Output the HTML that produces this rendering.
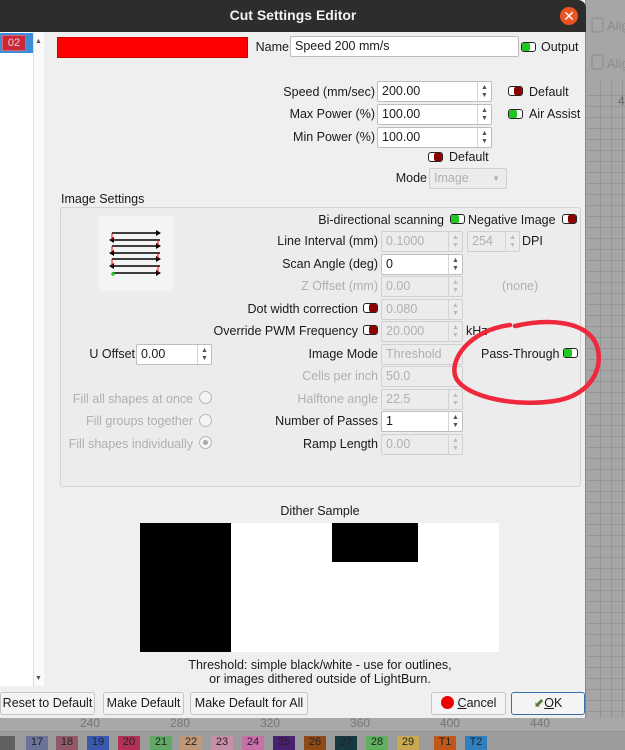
<!DOCTYPE html>
<html><head><meta charset="utf-8">
<style>
*{box-sizing:border-box;margin:0;padding:0}
body{width:625px;height:750px;overflow:hidden;position:relative;background:#a4a4a4;font-family:"Liberation Sans","DejaVu Sans",sans-serif;font-size:12px;color:#1a1a1a}
.a{position:absolute}
.t{position:absolute;white-space:nowrap;line-height:14px}
.r{text-align:right}
.dis{color:#b0b0b0}
.inp{position:absolute;background:#fff;border:1px solid #bdbdbd;border-radius:2px;height:21px;padding:2px 4px;line-height:15px;white-space:nowrap}
.inp.d{background:#ececec;color:#b0b0b0;border-color:#d0d0d0}
.sp{position:absolute;right:0;top:0;width:14px;height:100%;border-left:1px solid #d4d4d4;font-size:7px;line-height:8px;color:#555;text-align:center;padding-top:2px}
.inp.d .sp{color:#bbb}
.tg{position:absolute;width:15px;height:10px;border:1px solid #222;border-radius:3px;background:#fff}
.tg i{position:absolute;top:0;width:8px;height:8px;border-radius:2px}
.on i{left:0;background:#1ec81e}
.off i{right:0;background:#8b0000}
.btn{position:absolute;top:692px;height:23px;background:#f4f4f4;border:1px solid #c4c4c4;border-radius:3px;line-height:21px;text-align:center;font-size:12.5px}
.rad{position:absolute;width:13px;height:13px;border:1px solid #b8b8b8;border-radius:50%;background:#f4f4f4}
</style></head><body>
<svg class="a" style="left:585px;top:0" width="40" height="750">
<rect width="40" height="750" fill="#a6a6a6"/>
<g stroke="#959595" stroke-width="1">
<line x1="15.5" y1="80" x2="15.5" y2="720"/><line x1="26.5" y1="80" x2="26.5" y2="720"/><line x1="37.5" y1="80" x2="37.5" y2="720"/>
</g>
<g stroke="#959595"><path d="M0 95.5H40M0 106.5H40M0 117.5H40M0 128.5H40M0 139.5H40M0 150.5H40M0 161.5H40M0 172.5H40M0 183.5H40M0 194.5H40M0 205.5H40M0 216.5H40M0 227.5H40M0 238.5H40M0 249.5H40M0 260.5H40M0 271.5H40M0 282.5H40M0 293.5H40M0 304.5H40M0 315.5H40M0 326.5H40M0 337.5H40M0 348.5H40M0 359.5H40M0 370.5H40M0 381.5H40M0 392.5H40M0 403.5H40M0 414.5H40M0 425.5H40M0 436.5H40M0 447.5H40M0 458.5H40M0 469.5H40M0 480.5H40M0 491.5H40M0 502.5H40M0 513.5H40M0 524.5H40M0 535.5H40M0 546.5H40M0 557.5H40M0 568.5H40M0 579.5H40M0 590.5H40M0 601.5H40M0 612.5H40M0 623.5H40M0 634.5H40M0 645.5H40M0 656.5H40M0 667.5H40M0 678.5H40M0 689.5H40M0 700.5H40M0 711.5H40"/></g>
<rect x="7" y="18" width="11" height="14" rx="2" fill="none" stroke="#8c8c8c"/><text x="22" y="30" font-size="13" fill="#8c8c8c">Alig</text>
<rect x="7" y="55" width="11" height="14" rx="2" fill="none" stroke="#8c8c8c"/><text x="22" y="68" font-size="13" fill="#8c8c8c">Alig</text>
<text x="33" y="105" font-size="12" fill="#666">4</text>
</svg>
<div class="a" style="left:0;top:718px;width:625px;height:14px;background:#a8a8a8;border-bottom:1px solid #909090"></div>
<div class="t" style="left:80px;top:716px;color:#777">240</div>
<div class="t" style="left:170px;top:716px;color:#777">280</div>
<div class="t" style="left:260px;top:716px;color:#777">320</div>
<div class="t" style="left:350px;top:716px;color:#777">360</div>
<div class="t" style="left:440px;top:716px;color:#777">400</div>
<div class="t" style="left:530px;top:716px;color:#777">440</div>
<div class="a" style="left:0;top:732px;width:625px;height:18px;background:#9c9c9c"></div>
<div class="a" style="top:736px;left:0;font-size:11px;color:#222">
<span class="a" style="left:0;width:15px;height:14px;background:#606060"></span>
<span class="a" style="left:26px;width:22px;height:14px;background:#6a7398;text-align:center">17</span>
<span class="a" style="left:56px;width:22px;height:14px;background:#935868;text-align:center">18</span>
<span class="a" style="left:87px;width:22px;height:14px;background:#3a58b0;text-align:center">19</span>
<span class="a" style="left:118px;width:22px;height:14px;background:#b23058;text-align:center">20</span>
<span class="a" style="left:150px;width:22px;height:14px;background:#5fa865;text-align:center">21</span>
<span class="a" style="left:180px;width:22px;height:14px;background:#c09878;text-align:center">22</span>
<span class="a" style="left:211px;width:22px;height:14px;background:#c890a8;text-align:center">23</span>
<span class="a" style="left:242px;width:22px;height:14px;background:#c870a8;text-align:center">24</span>
<span class="a" style="left:273px;width:22px;height:14px;background:#4a2070;text-align:center">25</span>
<span class="a" style="left:304px;width:22px;height:14px;background:#904a18;text-align:center">26</span>
<span class="a" style="left:335px;width:22px;height:14px;background:#183840;text-align:center">27</span>
<span class="a" style="left:366px;width:22px;height:14px;background:#60b060;text-align:center">28</span>
<span class="a" style="left:397px;width:22px;height:14px;background:#c8a850;text-align:center">29</span>
<span class="a" style="left:434px;width:22px;height:14px;background:#c05818;text-align:center">T1</span>
<span class="a" style="left:465px;width:22px;height:14px;background:#3080c0;text-align:center">T2</span>
</div>
<div class="a" style="left:0;top:0;width:586px;height:718px;background:#efefef;border-right:1px solid #888"></div>
<div class="a" style="left:0;top:0;width:586px;height:32px;background:#2f2c2c;border-radius:0 8px 0 0"></div>
<div class="t" style="left:0;width:586px;top:8px;text-align:center;color:#f2f2f2;font-weight:bold;font-size:14px">Cut Settings Editor</div>
<div class="a" style="left:560px;top:7px;width:18px;height:18px;border-radius:50%;background:#e95420;color:#fff;text-align:center;line-height:18px;font-size:14px">✕</div>
<div class="a" style="left:0;top:32px;width:44px;height:654px;background:#fff;border-right:1px solid #c8c8c8"></div>
<div class="a" style="left:0;top:33px;width:33px;height:20px;background:#3a8fd8"></div>
<div class="a" style="left:2px;top:35px;width:24px;height:16px;background:#c8283a;border:1px solid #e06070;color:#f4d0d0;text-align:center;line-height:14px;font-size:11px">02</div>
<div class="a" style="left:33px;top:32px;width:11px;height:654px;border-left:1px solid #ddd;background:#fafafa"></div>
<div class="t" style="left:35px;top:35px;font-size:7px;color:#555">▲</div>
<div class="t" style="left:35px;top:672px;font-size:7px;color:#555">▼</div>
<div class="a" style="left:57px;top:37px;width:191px;height:21px;background:#f00;border:1px solid #c00"></div>
<div class="t r" style="right:336px;top:40px;font-size:12.5px">Name</div>
<div class="inp" style="left:290px;top:36px;width:229px;font-size:12.5px">Speed 200 mm/s</div>
<div class="tg on" style="left:521px;top:42px"><i></i></div>
<div class="t" style="left:541px;top:40px;font-size:12.5px">Output</div>
<div class="t r" style="right:250px;top:85px;font-size:12.5px">Speed (mm/sec)</div>
<div class="inp" style="left:377px;top:81px;width:115px;font-size:12.5px">200.00<div class="sp">▲<br>▼</div></div>
<div class="tg off" style="left:508px;top:86px"><i></i></div>
<div class="t" style="left:529px;top:85px;font-size:12.5px">Default</div>
<div class="t r" style="right:250px;top:107px;font-size:12.5px">Max Power (%)</div>
<div class="inp" style="left:377px;top:104px;width:115px;font-size:12.5px">100.00<div class="sp">▲<br>▼</div></div>
<div class="tg on" style="left:508px;top:109px"><i></i></div>
<div class="t" style="left:529px;top:107px;font-size:12.5px">Air Assist</div>
<div class="t r" style="right:250px;top:130px;font-size:12.5px">Min Power (%)</div>
<div class="inp" style="left:377px;top:127px;width:115px;font-size:12.5px">100.00<div class="sp">▲<br>▼</div></div>
<div class="tg off" style="left:428px;top:152px"><i></i></div>
<div class="t" style="left:449px;top:150px;font-size:12.5px">Default</div>
<div class="t r" style="right:198px;top:171px;font-size:12.5px">Mode</div>
<div class="inp d" style="left:429px;top:168px;width:78px;font-size:12.5px">Image<span style="position:absolute;right:6px;top:2px;font-size:8px">▼</span></div>
<div class="t" style="left:61px;top:192px;font-size:12.5px">Image Settings</div>
<div class="a" style="left:60px;top:207px;width:521px;height:280px;border:1px solid #d4d4d4;border-radius:3px;background:#ececec"></div>
<svg class="a" style="left:99px;top:216px" width="74" height="75">
<rect width="74" height="75" fill="#f4f4f4"/>
<g stroke="#000" stroke-width="1.5">
<line x1="13" y1="17" x2="60" y2="17"/><line x1="12" y1="24" x2="61" y2="24"/><line x1="13" y1="30" x2="60" y2="30"/><line x1="12" y1="37" x2="61" y2="37"/><line x1="13" y1="43" x2="60" y2="43"/><line x1="12" y1="50" x2="61" y2="50"/><line x1="13" y1="57" x2="60" y2="57"/>
</g>
<g fill="#000"><path d="M62 17l-5-3v6zM10 24l5-3v6zM62 30l-5-3v6zM10 37l5-3v6zM62 43l-5-3v6zM10 50l5-3v6zM62 57l-5-3v6z"/></g>
<g stroke="#e00" stroke-width="1"><line x1="13" y1="17" x2="13" y2="24"/><line x1="59" y1="24" x2="59" y2="30"/><line x1="13" y1="30" x2="13" y2="37"/><line x1="59" y1="37" x2="59" y2="43"/><line x1="13" y1="43" x2="13" y2="50"/><line x1="59" y1="50" x2="59" y2="57"/></g>
<circle cx="14" cy="58" r="1.8" fill="#2c2"/>
</svg>
<div class="t r" style="right:181px;top:213px;font-size:12.5px">Bi-directional scanning</div>
<div class="tg on" style="left:450px;top:214px"><i></i></div>
<div class="t" style="left:468px;top:213px;font-size:12.5px">Negative Image</div>
<div class="tg off" style="left:562px;top:214px"><i></i></div>
<div class="t r" style="right:247px;top:234px;font-size:12.5px">Line Interval (mm)</div>
<div class="inp d" style="left:381px;top:231px;width:82px;font-size:12.5px">0.1000<div class="sp">▲<br>▼</div></div>
<div class="inp d" style="left:467px;top:231px;width:53px;font-size:12.5px">254<div class="sp">▲<br>▼</div></div>
<div class="t" style="left:522px;top:234px;font-size:12.5px">DPI</div>
<div class="t r" style="right:247px;top:257px;font-size:12.5px">Scan Angle (deg)</div>
<div class="inp" style="left:381px;top:254px;width:82px;font-size:12.5px">0<div class="sp">▲<br>▼</div></div>
<div class="t r dis" style="right:247px;top:279px;font-size:12.5px">Z Offset (mm)</div>
<div class="inp d" style="left:381px;top:276px;width:82px;font-size:12.5px">0.00<div class="sp">▲<br>▼</div></div>
<div class="t dis" style="left:502px;top:279px;font-size:12.5px">(none)</div>
<div class="t r" style="right:267px;top:302px;font-size:12.5px">Dot width correction</div>
<div class="tg off" style="left:363px;top:303px"><i></i></div>
<div class="inp d" style="left:381px;top:299px;width:82px;font-size:12.5px">0.080<div class="sp">▲<br>▼</div></div>
<div class="t r" style="right:267px;top:324px;font-size:12.5px">Override PWM Frequency</div>
<div class="tg off" style="left:363px;top:325px"><i></i></div>
<div class="inp d" style="left:381px;top:321px;width:82px;font-size:12.5px">20.000<div class="sp">▲<br>▼</div></div>
<div class="t" style="left:466px;top:324px;font-size:12.5px">kHz</div>
<div class="t r" style="right:490px;top:347px;font-size:12.5px">U Offset</div>
<div class="inp" style="left:136px;top:344px;width:76px;font-size:12.5px">0.00<div class="sp">▲<br>▼</div></div>
<div class="t r" style="right:247px;top:347px;font-size:12.5px">Image Mode</div>
<div class="inp d" style="left:381px;top:344px;width:82px;font-size:12.5px">Threshold</div>
<div class="t" style="left:481px;top:347px;font-size:12.5px">Pass-Through</div>
<div class="tg on" style="left:563px;top:348px"><i></i></div>
<div class="t r dis" style="right:247px;top:369px;font-size:12.5px">Cells per inch</div>
<div class="inp d" style="left:381px;top:366px;width:82px;font-size:12.5px">50.0</div>
<div class="t r dis" style="right:432px;top:392px;font-size:12.5px">Fill all shapes at once</div>
<div class="rad" style="left:199px;top:391px"></div>
<div class="t r dis" style="right:247px;top:392px;font-size:12.5px">Halftone angle</div>
<div class="inp d" style="left:381px;top:389px;width:82px;font-size:12.5px">22.5<div class="sp">▲<br>▼</div></div>
<div class="t r dis" style="right:432px;top:414px;font-size:12.5px">Fill groups together</div>
<div class="rad" style="left:199px;top:414px"></div>
<div class="t r" style="right:247px;top:414px;font-size:12.5px">Number of Passes</div>
<div class="inp" style="left:381px;top:411px;width:82px;font-size:12.5px">1<div class="sp">▲<br>▼</div></div>
<div class="t r dis" style="right:432px;top:437px;font-size:12.5px">Fill shapes individually</div>
<div class="rad" style="left:199px;top:436px"><div class="a" style="left:3px;top:3px;width:5px;height:5px;border-radius:50%;background:#aaa"></div></div>
<div class="t r" style="right:247px;top:437px;font-size:12.5px">Ramp Length</div>
<div class="inp d" style="left:381px;top:434px;width:82px;font-size:12.5px">0.00<div class="sp">▲<br>▼</div></div>
<div class="t" style="left:0;width:640px;top:504px;text-align:center;font-size:12.5px">Dither Sample</div>
<div class="a" style="left:140px;top:523px;width:359px;height:129px;background:#fff"></div>
<div class="a" style="left:140px;top:523px;width:91px;height:129px;background:#000"></div>
<div class="a" style="left:332px;top:523px;width:86px;height:39px;background:#000"></div>
<div class="t" style="left:0;width:640px;top:658px;text-align:center;font-size:12.5px">Threshold: simple black/white - use for outlines,</div>
<div class="t" style="left:0;width:640px;top:672px;text-align:center;font-size:12.5px">or images dithered outside of LightBurn.</div>
<div class="btn" style="left:0;width:95px">Reset to Default</div>
<div class="btn" style="left:103px;width:81px">Make Default</div>
<div class="btn" style="left:190px;width:118px">Make Default for All</div>
<div class="btn" style="left:431px;width:75px"><span style="display:inline-block;width:13px;height:13px;border-radius:50%;background:#e00;vertical-align:-2px;margin-right:4px"></span><u>C</u>ancel</div>
<div class="btn" style="left:511px;width:74px;border-color:#3a6ea8"><span style="color:#5a7a3a">⬋</span><u>O</u>K</div>
<svg class="a" style="left:0;top:0" width="625" height="750"><path d="M510 325C470 330 448 360 456 378C466 398 520 408 560 400C596 392 606 360 594 340C582 322 550 318 515 326" fill="none" stroke="#f0283c" stroke-width="4.5" stroke-linecap="round"/></svg>
</body></html>
